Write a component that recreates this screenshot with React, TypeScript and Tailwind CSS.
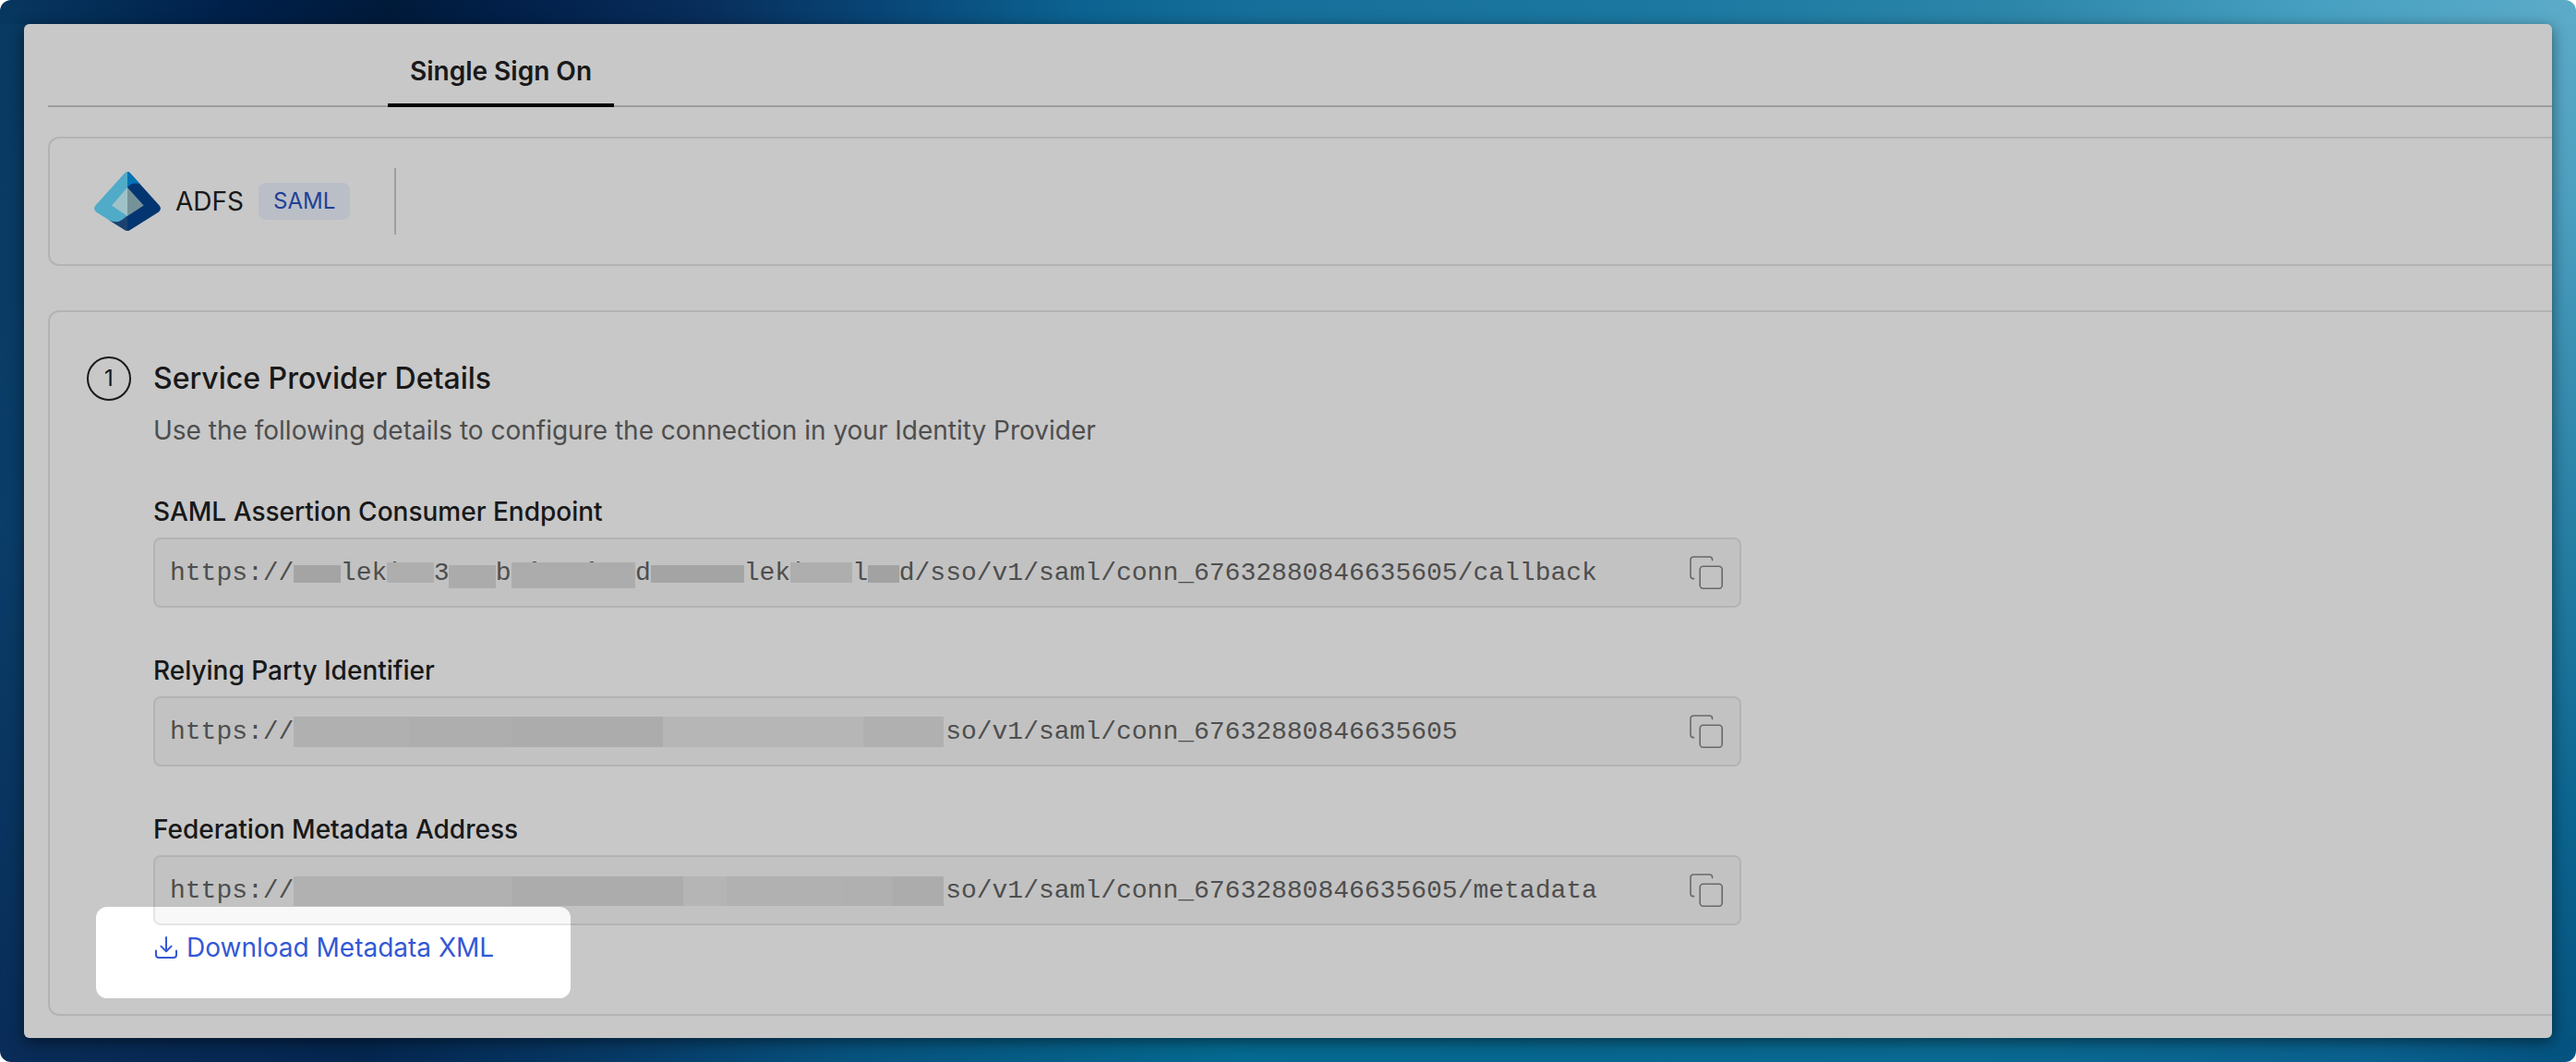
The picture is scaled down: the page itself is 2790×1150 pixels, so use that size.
type Mask = { at: number; span: number; top: number; height: number; color: string };

type Endpoint = { id: string; label: string; value: string; masks: Mask[] };

const gap = (count: number) => '\u00a0'.repeat(count);

const endpoints: Endpoint[] = [
  {
    id: 'acs',
    label: 'SAML Assertion Consumer Endpoint',
    value: `https://${gap(3)}lek${gap(3)}3${gap(3)}b${gap(8)}d${gap(6)}lek${gap(4)}l${gap(2)}d/sso/v1/saml/conn_67632880846635605/callback`,
    masks: [
      { at: 8, span: 3, top: 28, height: 19, color: '#d1d1d1' },
      { at: 14, span: 3, top: 25, height: 22, color: '#dedede' },
      { at: 18, span: 3, top: 28, height: 25, color: '#dadada' },
      { at: 22, span: 8, top: 25, height: 28, color: '#dcdcdc' },
      { at: 31, span: 6, top: 28, height: 19, color: '#d1d1d1' },
      { at: 40, span: 4, top: 25, height: 22, color: '#dedede' },
      { at: 45, span: 2, top: 28, height: 19, color: '#cfcfcf' },
      { at: 14.4, span: 0.2, top: 24, height: 1, color: '#646464' },
      { at: 23.4, span: 0.2, top: 24, height: 1, color: '#646464' },
      { at: 27.1, span: 0.2, top: 24, height: 1, color: '#646464' },
      { at: 40.4, span: 0.2, top: 24, height: 1, color: '#646464' },
    ],
  },
  {
    id: 'rpi',
    label: 'Relying Party Identifier',
    value: `https://${gap(42)}so/v1/saml/conn_67632880846635605`,
    masks: [
      { at: 8, span: 7.4, top: 20, height: 33, color: '#e1e1e1' },
      { at: 15.4, span: 6.6, top: 20, height: 33, color: '#dedede' },
      { at: 22, span: 9.8, top: 20, height: 33, color: '#dcdcdc' },
      { at: 31.8, span: 12.9, top: 20, height: 33, color: '#e8e8e8' },
      { at: 44.7, span: 5.2, top: 20, height: 33, color: '#e1e1e1' },
    ],
  },
  {
    id: 'fma',
    label: 'Federation Metadata Address',
    value: `https://${gap(42)}so/v1/saml/conn_67632880846635605/metadata`,
    masks: [
      { at: 8, span: 14, top: 21, height: 32, color: '#e2e2e2' },
      { at: 22, span: 11.1, top: 21, height: 32, color: '#dcdcdc' },
      { at: 33.1, span: 2.8, top: 21, height: 32, color: '#e7e7e7' },
      { at: 35.9, span: 7.4, top: 21, height: 32, color: '#e2e2e2' },
      { at: 43.3, span: 3.3, top: 21, height: 32, color: '#e1e1e1' },
      { at: 46.6, span: 3.3, top: 21, height: 32, color: '#dcdcdc' },
    ],
  },
];

function AdfsLogo() {
  return (
    <svg viewBox="0 0 72 64" className="h-16 w-[72px] shrink-0" aria-hidden="true">
      <defs>
        <clipPath id="adfs-shape">
          <path d="M33 1.4Q36-1.2 39 1.4L70.6 36.4Q73.6 40.4 70 43.4L39.4 62.8Q36 65.2 32.6 62.8L2 43.4Q-1.6 40.4 1.4 36.4Z" />
        </clipPath>
      </defs>
      <g clipPath="url(#adfs-shape)">
        <path d="M0 0H36V64H0Z" fill="#66daff" />
        <path d="M36 0H72V64H36Z" fill="#044591" />
        <path d="M36 0H50V13.4Q41 10.6 36 17Z" fill="#0093e7" />
        <path d="M16 52.6Q25 56.4 31 51.4L36 47.6V64H16Z" fill="#24548f" />
        <path d="M36 17V48L19 36.5Z" fill="#cbf8ff" />
        <path d="M36 17V48L53.6 36.5Z" fill="#97bbc4" />
      </g>
    </svg>
  );
}

function CopyIcon() {
  return (
    <svg viewBox="0 0 36 36" className="size-9" fill="none" stroke="currentColor" strokeWidth="1.6" strokeLinecap="round" aria-hidden="true">
      <rect x="11.2" y="11.2" width="24" height="24" rx="3.4" />
      <path d="M4.6 24.6H4.2A3.2 3.2 0 0 1 1 21.4V4.2A3.2 3.2 0 0 1 4.2 1H21.4A3.2 3.2 0 0 1 24.6 4.2V4.6" />
    </svg>
  );
}

function DownloadIcon() {
  return (
    <svg viewBox="0 0 28 28" className="size-7 shrink-0" fill="none" stroke="currentColor" strokeWidth="2" strokeLinecap="round" strokeLinejoin="round" aria-hidden="true">
      <path d="M14 3V18M8.4 12.6L14 18.2L19.6 12.6" />
      <path d="M3 17.6V22A3 3 0 0 0 6 25H22A3 3 0 0 0 25 22V17.6" />
    </svg>
  );
}

function EndpointField({ endpoint }: { endpoint: Endpoint }) {
  return (
    <div className="flex flex-col gap-2">
      <label htmlFor={endpoint.id} className="text-[28px] leading-10 font-medium">
        {endpoint.label}
      </label>
      <div className="relative flex h-[76px] max-w-[1720px] items-center rounded-lg border-2 border-[#e5e5e5] bg-[#f8f8f8] pr-[18px] pl-4 font-['Liberation_Mono',monospace] text-[28px] text-[#646464]">
        <input id={endpoint.id} readOnly value={endpoint.value} className="h-full min-w-0 grow bg-transparent outline-none" />
        <button type="button" aria-label={`Copy ${endpoint.label}`} className="shrink-0 pl-6 text-[#868686]">
          <CopyIcon />
        </button>
        <div className="pointer-events-none absolute inset-y-0 right-4 left-4">
          {endpoint.masks.map((m) => (
            <span
              key={m.at}
              className="absolute"
              style={{ left: `${m.at}ch`, width: `${m.span}ch`, top: m.top, height: m.height, backgroundColor: m.color }}
            />
          ))}
        </div>
      </div>
    </div>
  );
}

const frame =
  "bg-[linear-gradient(90deg,#07375f_0%,#00204a_9%,#001a3a_15%,#02204a_20%,#082d5a_27%,#084576_34%,#0c6391_42%,#166f9a_49%,#1c78a1_65%,#2c86aa_78%,#47a0c1_90%,#5cabc9_100%),linear-gradient(90deg,#0a2c58_0%,#04264f_14%,#073a66_24%,#07527e_33%,#056a90_48%,#07678f_60%,#0a6a92_76%,#0a618e_92%,#04527f_100%),linear-gradient(180deg,#083a62_0%,#0a3d68_50%,#082c57_100%),linear-gradient(180deg,#5cabc9_0%,#4da0c0_18%,#2c84a8_45%,#0c6690_75%,#04527f_100%)] bg-[size:100%_26px,100%_26px,50%_100%,50%_100%] bg-[position:top,bottom,left,right] bg-no-repeat";

export default function App() {
  return (
    <div className="min-h-screen bg-white font-['Inter',sans-serif] text-[#202020]">
      <div className={`flex min-h-screen overflow-hidden rounded-xl p-[26px] ${frame}`}>
        <div className="flex min-w-0 grow rounded-md shadow-[0_4px_16px_rgba(0,0,0,0.5)]">
          <main className="relative min-w-0 grow overflow-hidden rounded-md bg-white pl-[26px]">
            <nav className="flex h-[90px] border-b-2 border-[#cacaca] pl-[368px]" role="tablist">
              <button type="button" role="tab" aria-selected="true" className="-mb-0.5 border-b-4 border-black px-6 pt-4 text-[28px] leading-10 font-semibold">
                Single Sign On
              </button>
            </nav>

            <section className="mt-8 flex items-center rounded-l-xl border-2 border-r-0 border-[#e5e5e5] py-8 pl-12">
              <div className="flex items-center gap-4">
                <AdfsLogo />
                <span className="text-[28px] leading-10">ADFS</span>
                <span className="rounded-lg bg-[#edf2fe] px-4 text-[24px] leading-10 text-[#2a52be]">SAML</span>
              </div>
              <div className="ml-12 h-[72px] w-0.5 bg-[#cacaca]" />
            </section>

            <section className="mt-12 flex items-start gap-6 rounded-l-xl border-2 border-r-0 border-[#e5e5e5] pt-12 pb-[52px] pl-10">
              <span className="flex size-12 shrink-0 items-center justify-center rounded-full border-2 border-[#202020] text-[24px]">1</span>
              <div className="min-w-0 grow">
                <h2 className="text-[32px] leading-[48px] font-medium">Service Provider Details</h2>
                <p className="mt-3 text-[28px] leading-10 text-[#646464]">
                  Use the following details to configure the connection in your Identity Provider
                </p>
                <div className="mt-12 flex flex-col gap-12">
                  {endpoints.map((e) => (
                    <EndpointField key={e.id} endpoint={e} />
                  ))}
                </div>
                <div className="relative mt-1 flex">
                  <a href="#metadata" className="flex items-center gap-2 text-[28px] leading-10 text-[#3358d4]">
                    <DownloadIcon />
                    Download Metadata XML
                  </a>
                  <div className="pointer-events-none absolute -top-6 -left-[62px] z-10 h-[99px] w-[514px] rounded-xl shadow-[0_0_0_4000px_rgba(0,0,0,0.216)]" />
                </div>
              </div>
            </section>
          </main>
        </div>
      </div>
    </div>
  );
}
